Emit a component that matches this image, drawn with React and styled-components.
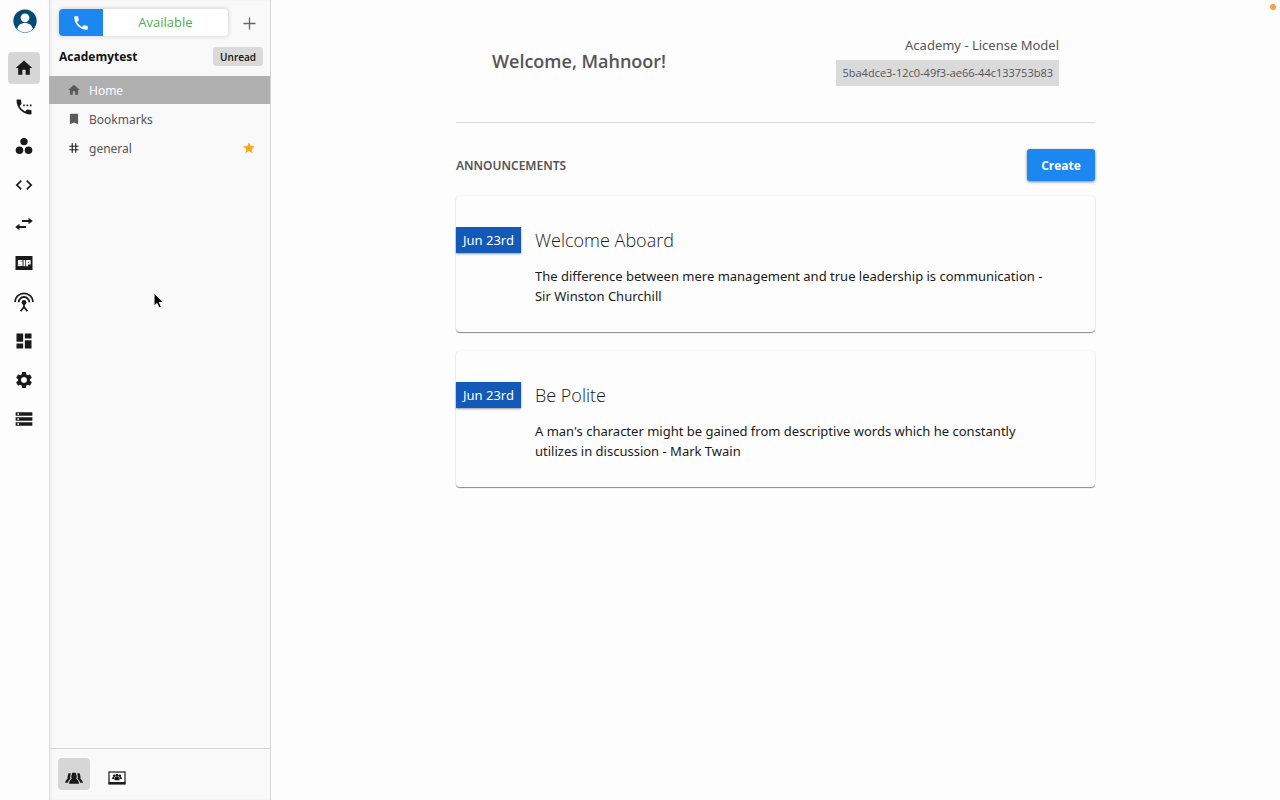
import React, {useState} from 'react'
import styled, {createGlobalStyle} from 'styled-components'
import {
    MdHome,
    MdSettingsPhone,
    MdCode,
    MdDashboard,
    MdSettings,
    MdStorage,
    MdPhone,
    MdBookmark,
    MdStar,
    MdTag
} from 'react-icons/md'


const CirclesIcon = () => (
    <svg viewBox="0 0 20 20" fill="currentColor">
        <circle cx="10" cy="5.6" r="3.7" />
        <circle cx="5.5" cy="14.2" r="3.8" />
        <circle cx="14.5" cy="14.2" r="3.8" />
    </svg>
)

const SwapIcon = () => (
    <svg viewBox="0 0 20 20" fill="currentColor">
        <path d="M8 6h6.500V3.800l4.300 3.200-4.300 3.200V8H8z" />
        <path d="M12 12H5.500V9.800L1.200 13l4.300 3.200V14H12z" />
    </svg>
)

const SipIcon = () => (
    <svg viewBox="0 0 20 20">
        <rect x="1.5" y="3" width="17" height="14" fill="currentColor" />
        <g fill="none" stroke="#fdfdfd" strokeWidth="1.8">
            <path d="M8.4 7.900H4.800v2.100h2.800v2.200H3.800" />
            <path d="M10.400 7v6.200" />
            <path d="M13 13.200V7.900h2.700v2.700H13" />
        </g>
    </svg>
)

const AntennaIcon = () => (
    <svg viewBox="0 0 20 20" fill="none" stroke="currentColor" strokeWidth="1.8">
        <path d="M1 10a9 8.6 0 0 1 18 0" />
        <path d="M4.6 10.2a5.4 5.2 0 0 1 10.8 0" />
        <circle cx="10" cy="10.4" r="2.4" fill="currentColor" stroke="none" />
        <path d="M10 12v3.4M10 15L6.6 19.2M10 15l3.4 4.2" />
    </svg>
)

const PlusIcon = () => (
    <svg viewBox="0 0 17 17" fill="none" stroke="currentColor" strokeWidth="1.3">
        <path d="M8.5 2.5v12M2.5 8.5h12" />
    </svg>
)

const GroupIcon = () => (
    <svg viewBox="0 0 18 18" fill="currentColor">
        <path d="M7.2 3.800h3.600l1 4-.6 1.600 2.100 2.400.8 3H3.900l.8-3 2.100-2.400-.6-1.600z" />
        <path d="M3.400 4.200h2.400l-.7 4.200.5 1.200-2 2.200-.8 2H0l.9-2.400 1.800-1.800-.3-1.400z" />
        <path d="M14.600 4.200h-2.400l.7 4.200-.5 1.200 2 2.200.8 2H18l-.9-2.400-1.800-1.800.3-1.400z" />
    </svg>
)

const MonitorIcon = () => (
    <svg viewBox="0 0 18 18">
        <rect x="1" y="3" width="16" height="11" fill="#fdfdfd" stroke="currentColor" strokeWidth="1.2" />
        <path d="M.4 13h17.200v2.600H.4z" fill="currentColor" />
        <g fill="currentColor">
            <circle cx="9" cy="6.2" r="1.5" />
            <circle cx="6.2" cy="6.7" r="1.3" />
            <circle cx="11.8" cy="6.7" r="1.3" />
            <path d="M6.400 11.200c0-2.500 1-3.600 2.600-3.600s2.600 1.100 2.600 3.600z" />
            <path d="M4 10c0-1.800.9-2.600 2.400-2.600V10zM14 10c0-1.800-.9-2.600-2.400-2.600V10z" />
        </g>
    </svg>
)

const AvatarIcon = () => (
    <svg viewBox="0 0 24 24">
        <circle cx="12" cy="12" r="11.6" fill="#034a73" />
        <circle cx="12" cy="8.8" r="4.4" fill="#fdfdfd" />
        <path d="M4.200 20c.6-3.800 3.600-6 7.800-6s7.200 2.200 7.800 6a11 11 0 0 1-15.600 0z" fill="#fdfdfd" />
    </svg>
)

const CursorIcon = () => (
    <svg viewBox="0 0 12 18">
        <path d="M1 1v13l3-2.600 2 4.600 2.400-1-2-4.500h4z" fill="#000" stroke="#fff" strokeWidth="1" />
    </svg>
)

const railItems = [
    {name: 'Home', icon: <MdHome />},
    {name: 'Calls', icon: <MdSettingsPhone />},
    {name: 'Workspaces', icon: <CirclesIcon />},
    {name: 'Code', icon: <MdCode />},
    {name: 'Transfers', icon: <SwapIcon />},
    {name: 'SIP', icon: <SipIcon />},
    {name: 'Broadcast', icon: <AntennaIcon />},
    {name: 'Dashboard', icon: <MdDashboard />},
    {name: 'Settings', icon: <MdSettings />},
    {name: 'Storage', icon: <MdStorage />}
]

const channels = [
    {name: 'Home', icon: <MdHome />},
    {name: 'Bookmarks', icon: <MdBookmark />},
    {name: 'general', icon: <MdTag />, dark: true, starred: true}
]

const announcements = [
    {
        date: 'Jun 23rd',
        title: 'Welcome Aboard',
        text: 'The difference between mere management and true leadership is communication - Sir Winston Churchill'
    },
    {
        date: 'Jun 23rd',
        title: 'Be Polite',
        text: "A man's character might be gained from descriptive words which he constantly utilizes in discussion - Mark Twain"
    }
]

const App = () => {

    const [page, setPage] = useState('Home')
    const [channel, setChannel] = useState('Home')

    return(
        <>
            <GlobalStyle />
            <Layout>
                <Rail>
                    <AvatarButton aria-label="Profile"><AvatarIcon /></AvatarButton>
                    {railItems.map(item => (
                        <IconButton
                            key={item.name}
                            aria-label={item.name}
                            $active={item.name === page}
                            onClick={() => setPage(item.name)}
                        >
                            {item.icon}
                        </IconButton>
                    ))}
                </Rail>
                <Sidebar>
                    <StatusRow>
                        <StatusPill>
                            <CallButton aria-label="Call"><MdPhone /></CallButton>
                            <StatusButton>Available</StatusButton>
                        </StatusPill>
                        <AddButton aria-label="Add"><PlusIcon /></AddButton>
                    </StatusRow>
                    <TeamRow>
                        <TeamName>Academytest</TeamName>
                        <UnreadButton>Unread</UnreadButton>
                    </TeamRow>
                    <ChannelList>
                        {channels.map(item => (
                            <Channel
                                key={item.name}
                                $active={item.name === channel}
                                $dark={item.dark}
                                onClick={() => setChannel(item.name)}
                            >
                                {item.icon}
                                <ChannelName>{item.name}</ChannelName>
                                {item.starred && <Star />}
                            </Channel>
                        ))}
                    </ChannelList>
                    <SidebarFooter>
                        <FooterButton aria-label="People" $active><GroupIcon /></FooterButton>
                        <FooterButton aria-label="Rooms"><MonitorIcon /></FooterButton>
                    </SidebarFooter>
                </Sidebar>
                <Main>
                    <Content>
                        <WelcomeHeader>
                            <Welcome>Welcome, Mahnoor!</Welcome>
                            <License>
                                <LicenseName>Academy - License Model</LicenseName>
                                <LicenseKey>5ba4dce3-12c0-49f3-ae66-44c133753b83</LicenseKey>
                            </License>
                        </WelcomeHeader>
                        <SectionHeader>
                            <SectionTitle>ANNOUNCEMENTS</SectionTitle>
                            <CreateButton>Create</CreateButton>
                        </SectionHeader>
                        <Cards>
                            {announcements.map(item => (
                                <Card key={item.title}>
                                    <DateBadge>{item.date}</DateBadge>
                                    <CardBody>
                                        <CardTitle>{item.title}</CardTitle>
                                        <CardText>{item.text}</CardText>
                                    </CardBody>
                                </Card>
                            ))}
                        </Cards>
                    </Content>
                </Main>
            </Layout>
            <RecordingDot />
            <Cursor><CursorIcon /></Cursor>
        </>
    )
}

export default App


const GlobalStyle = createGlobalStyle`
    * {
        box-sizing: border-box;
    }
    body {
        margin: 0;
        background-color: #fdfdfd;
        color: #1a1a1a;
        font-family: 'Open Sans', 'Noto Sans', sans-serif;
        font-size: 13px;
    }
    button {
        font-family: inherit;
        border: none;
        padding: 0;
        cursor: pointer;
    }
    svg {
        display: block;
        flex-shrink: 0;
    }
`

const Layout = styled.div`
    display: flex;
    min-height: 100vh;
`

const Rail = styled.nav`
    display: flex;
    flex-direction: column;
    align-items: center;
    gap: 7px;
    width: 49px;
    padding: 8px 1px 0 0;
    flex-shrink: 0;
`

const AvatarButton = styled.button`
    width: 26px;
    height: 26px;
    margin: 0 0 11px 2px;
    border-radius: 50%;
    background: #eef2f4;
    svg {
        width: 24px;
        height: 24px;
        margin: 0 auto;
    }
`

const IconButton = styled.button`
    display: flex;
    align-items: center;
    justify-content: center;
    width: 32px;
    height: 32px;
    border-radius: 4px;
    color: #1a1a1a;
    background-color: ${props => props.$active ? '#d6d6d6' : 'transparent'};
    svg {
        width: 20px;
        height: 20px;
    }
`

const Sidebar = styled.aside`
    display: flex;
    flex-direction: column;
    width: 222px;
    flex-shrink: 0;
    background-color: #f9f9f9;
    border-right: 1px solid #d6d6d6;
    box-shadow: inset 1px 0 0 #dedede, inset 3px 0 3px -1px #e8e8e8;
`

const StatusRow = styled.div`
    display: flex;
    align-items: center;
    justify-content: space-between;
    padding: 9px 12px 0 10px;
`

const StatusPill = styled.div`
    display: flex;
    flex: 1;
    height: 27px;
    margin-right: 13px;
    border-radius: 4px;
    overflow: hidden;
    background-color: #fff;
    box-shadow: 0 0 5px rgba(0, 0, 0, 0.2);
`

const CallButton = styled.button`
    display: flex;
    align-items: center;
    justify-content: center;
    width: 44px;
    color: #fff;
    background-color: #1c87f0;
    svg {
        width: 18px;
        height: 18px;
    }
`

const StatusButton = styled.button`
    flex: 1;
    padding-bottom: 1px;
    color: #4caf50;
    background-color: transparent;
    font-size: 13px;
`

const AddButton = styled.button`
    padding-top: 2px;
    color: #666;
    background-color: transparent;
    svg {
        width: 17px;
        height: 17px;
    }
`

const TeamRow = styled.div`
    display: flex;
    align-items: center;
    justify-content: space-between;
    padding: 11px 7px 10px 10px;
`

const TeamName = styled.h2`
    margin: 0;
    color: #111;
    font-size: 12px;
    line-height: 18px;
    font-weight: 700;
`

const UnreadButton = styled.button`
    height: 19px;
    padding: 0 7px;
    border-radius: 3px;
    background-color: #dadada;
    color: #111;
    font-size: 10px;
    font-weight: 600;
`

const ChannelList = styled.div`
    display: flex;
    flex-direction: column;
    gap: 1px;
    flex: 1;
`

const Channel = styled.button`
    display: flex;
    align-items: center;
    gap: 8px;
    height: 28px;
    padding: 0 14px 0 18px;
    color: ${props => props.$active ? '#fdfdfd' : '#555'};
    background-color: ${props => props.$active ? '#b0b0b0' : 'transparent'};
    font-family: 'Noto Sans', sans-serif;
    font-size: 12px;
    text-align: left;
    svg {
        width: 14px;
        height: 14px;
        color: ${props => props.$dark ? '#222' : '#5a5a5a'};
    }
`

const ChannelName = styled.span`
    flex: 1;
`

const Star = styled(MdStar)`
    && {
        color: #ffa41c;
    }
`

const SidebarFooter = styled.div`
    display: flex;
    gap: 11px;
    padding: 9px 9px 10px;
    border-top: 1px solid #d6d6d6;
`

const FooterButton = styled(IconButton)`
    padding-top: 7px;
    svg {
        width: 18px;
        height: 18px;
    }
`

const Main = styled.main`
    display: flex;
    justify-content: center;
    flex: 1;
    padding: 0 24px;
`

const Content = styled.div`
    width: 100%;
    max-width: 639px;
`

const WelcomeHeader = styled.header`
    display: flex;
    align-items: center;
    justify-content: space-between;
    padding: 36px;
    border-bottom: 1px solid #d8d8d8;
    color: #555;
`

const Welcome = styled.h1`
    margin: 0;
    font-size: 18px;
    font-weight: 600;
`

const License = styled.div`
    display: flex;
    flex-direction: column;
    align-items: flex-end;
    gap: 6px;
`

const LicenseName = styled.div`
    font-family: 'Noto Sans', sans-serif;
    font-size: 13px;
    line-height: 18px;
`

const LicenseKey = styled.div`
    padding: 0 6px;
    border-radius: 1px;
    background-color: #dadada;
    font-size: 11px;
    line-height: 26px;
`

const SectionHeader = styled.div`
    display: flex;
    align-items: center;
    justify-content: space-between;
    padding: 26px 0 15px;
`

const SectionTitle = styled.h2`
    margin: 0;
    color: #555;
    font-family: 'Noto Sans', sans-serif;
    font-size: 12px;
    font-weight: 600;
`

const CreateButton = styled.button`
    width: 68px;
    height: 32px;
    border-radius: 3px;
    color: #fff;
    background-color: #1c87f0;
    box-shadow: 0 1px 3px rgba(0, 0, 0, 0.5);
    font-size: 12px;
    font-weight: 700;
`

const Cards = styled.div`
    display: flex;
    flex-direction: column;
    gap: 19px;
`

const Card = styled.article`
    display: flex;
    align-items: flex-start;
    gap: 14px;
    padding: 31px 36px 26px 0;
    border-radius: 4px;
    box-shadow: 0 1px 1px rgba(0, 0, 0, 0.45), 0 0 2px rgba(0, 0, 0, 0.08);
`

const DateBadge = styled.div`
    flex-shrink: 0;
    padding: 0 7px;
    color: #fff;
    background-color: #1259b8;
    box-shadow: 0 1px 2px rgba(0, 0, 0, 0.4);
    font-family: 'Noto Sans', sans-serif;
    font-size: 13px;
    line-height: 26px;
`

const CardBody = styled.div`
    flex: 1;
`

const CardTitle = styled.h3`
    margin: 0 0 13px;
    font-size: 18px;
    line-height: 26px;
    font-weight: 300;
`

const CardText = styled.p`
    margin: 0;
    font-family: 'Noto Sans', sans-serif;
    font-size: 13px;
    line-height: 20px;
`

const RecordingDot = styled.div`
    position: absolute;
    top: 4px;
    right: 4px;
    width: 6px;
    height: 6px;
    border-radius: 50%;
    background-color: #ff9f3a;
`

const Cursor = styled.div`
    position: absolute;
    top: 292px;
    left: 153px;
    width: 12px;
    pointer-events: none;
`
